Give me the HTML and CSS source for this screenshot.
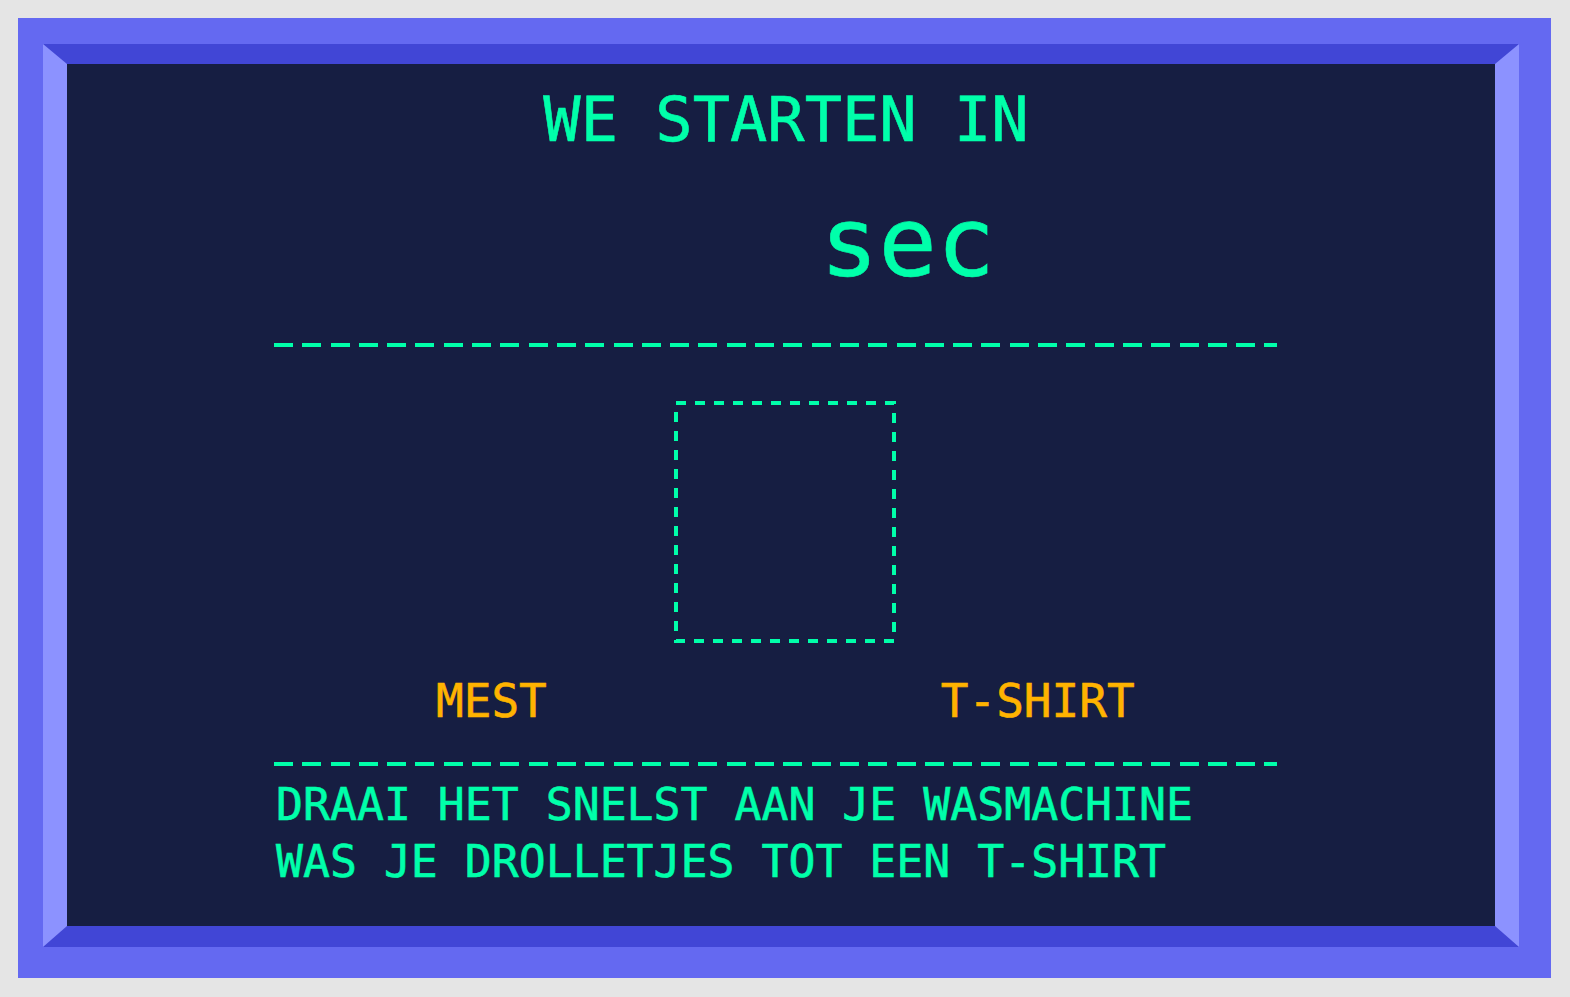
FILE: index.html
```html
<!DOCTYPE html>
<html lang="nl">
<head>
<meta charset="utf-8">
<title>Wasmachine</title>
<link rel="stylesheet" href="styles.css">
</head>
<body>
<div class="frame">
  <div class="bevel">
    <div class="screen">
      <h1 class="title">WE STARTEN IN</h1>
      <div class="count"><span class="num"></span>sec</div>
      <div class="column">
        <div class="dashline"></div>
        <div class="slot">
          <svg class="slot-border" width="222" height="242" viewBox="0 0 222 242" aria-hidden="true">
            <rect x="2" y="2" width="218" height="238" fill="none" stroke="#00ffaa" stroke-width="4" stroke-dasharray="10 9"/>
          </svg>
        </div>
        <div class="labels">
          <span class="label">MEST</span>
          <span class="label">T-SHIRT</span>
        </div>
        <div class="dashline dashline-2"></div>
        <p class="info">DRAAI HET SNELST AAN JE WASMACHINE<br>WAS JE DROLLETJES TOT EEN T-SHIRT</p>
      </div>
    </div>
  </div>
</div>
</body>
</html>
```

FILE: styles.css
```css
html, body {
  margin: 0;
  padding: 0;
}
body {
  background: #e5e5e5;
  padding: 18px;
  font-family: "DejaVu Sans Mono", "Liberation Mono", monospace;
  color: #00ffaa;
}
.frame {
  width: 1533px;
  height: 960px;
  box-sizing: border-box;
  background: #6469f1;
  padding: 26px 32px 31px 25px;
}
.bevel {
  height: 100%;
  box-sizing: border-box;
  border-style: solid;
  border-width: 20px 24px 21px 24px;
  border-color: #4146d6 #8c92ff #4146d6 #8c92ff;
}
.screen {
  height: 100%;
  background: #161e42;
  padding-top: 25px;
  box-sizing: border-box;
  -webkit-text-stroke: 0.6px currentColor;
}
.title {
  margin: 0;
  font-weight: normal;
  font-size: 62px;
  line-height: 62px;
  text-align: center;
  padding-left: 10px;
}
.count {
  margin-top: 44px;
  font-size: 97px;
  line-height: 95px;
  padding-left: 753px;
}
.column {
  margin-left: 207px;
  width: 1003px;
}
.dashline {
  margin-top: 53px;
  height: 4px;
  background: repeating-linear-gradient(90deg, #00ffaa 0 19px, transparent 19px 28.3px);
}
.slot {
  margin-top: 54px;
  margin-left: 400px;
  width: 222px;
  height: 242px;
}
.slot-border {
  display: block;
}
.labels {
  margin-top: 35px;
  display: flex;
  padding-left: 162px;
  font-size: 46px;
  line-height: 46px;
  color: #ffb300;
}
.label + .label {
  margin-left: 394px;
}
.dashline-2 {
  margin-top: 38px;
}
.info {
  margin: 10px 0 0;
  padding-left: 2px;
  font-size: 44.8px;
  line-height: 57px;
}
```
